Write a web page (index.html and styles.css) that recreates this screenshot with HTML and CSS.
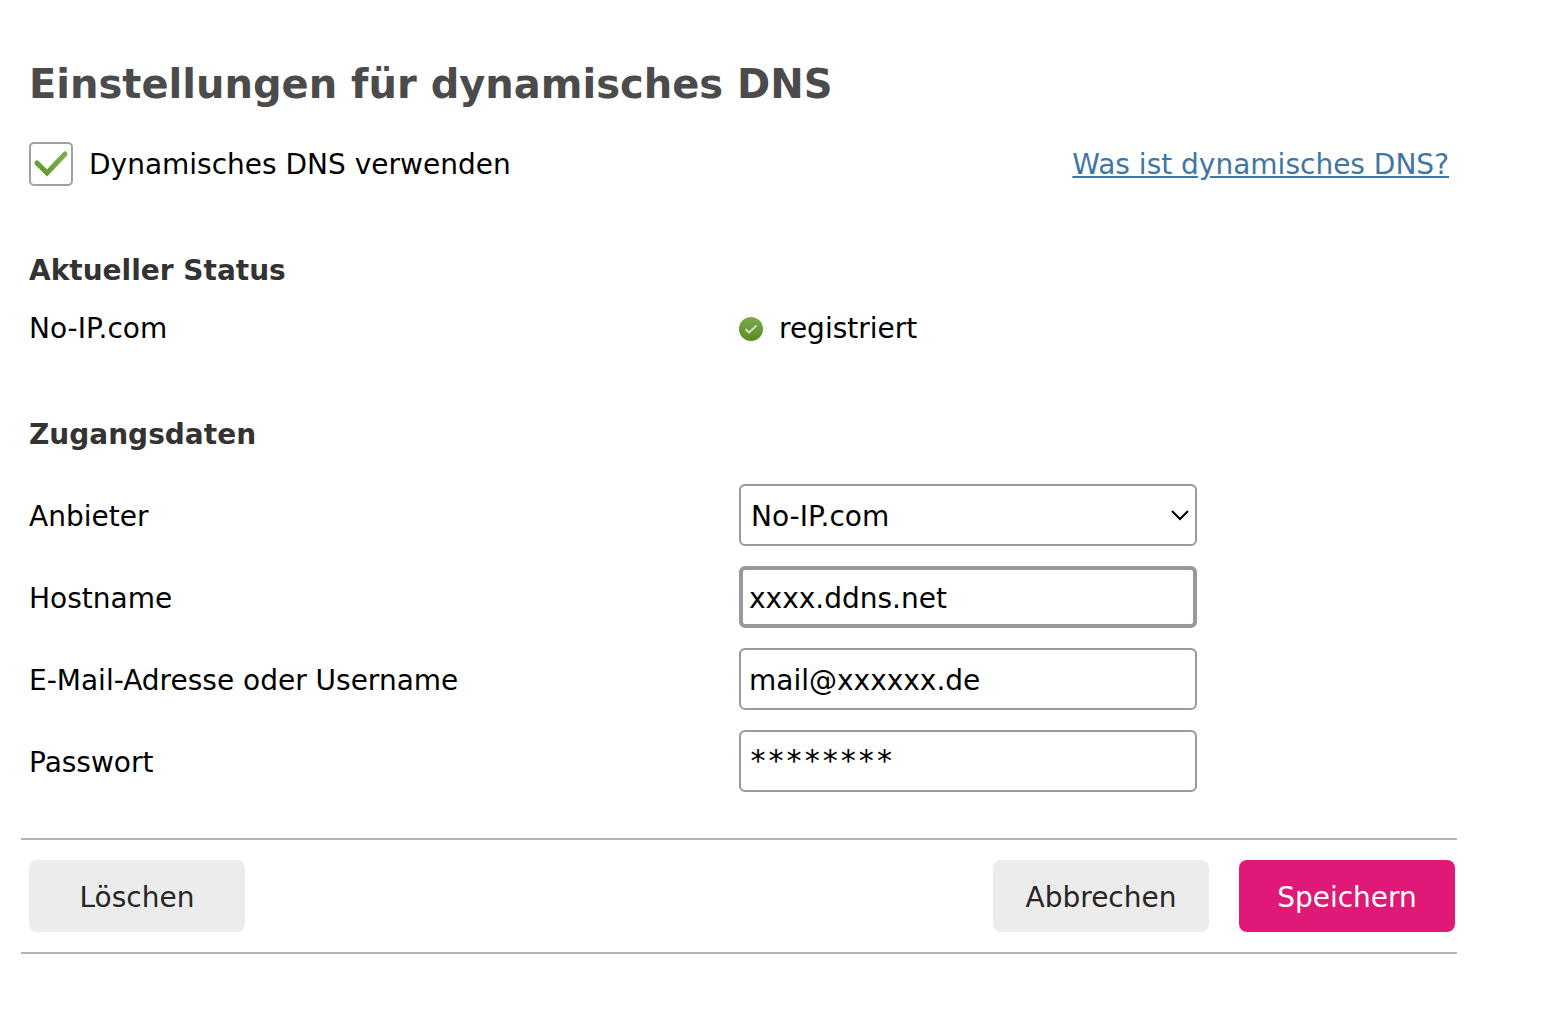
FILE: index.html
```html
<!DOCTYPE html>
<html lang="de">
<head>
    <meta charset="UTF-8">
    <meta name="viewport" content="width=device-width, initial-scale=1.0">
    <title>Einstellungen für dynamisches DNS</title>
    <link rel="stylesheet" href="styles.css">
</head>
<body>
    <form class="container">
        <div class="content">
            <h1>Einstellungen für dynamisches DNS</h1>

            <div class="activation">
                <div class="checkbox-group">
                    <input type="checkbox" id="use_dns" name="use_dns" checked>
                    <label for="use_dns">Dynamisches DNS verwenden</label>
                </div>
                <a class="help-link" href="#">Was ist dynamisches DNS?</a>
            </div>

            <section class="status">
                <h2>Aktueller Status</h2>
                <div class="row">
                    <span>No-IP.com</span>
                    <span class="state">
                        <svg class="state-icon" viewBox="0 0 24 24" aria-hidden="true">
                            <defs>
                                <linearGradient id="green" x1="0" y1="0" x2="0" y2="1">
                                    <stop offset="0" stop-color="#7cab4c"/>
                                    <stop offset="1" stop-color="#5a8a24"/>
                                </linearGradient>
                            </defs>
                            <circle cx="12" cy="12" r="12" fill="url(#green)"/>
                            <path d="M6.5 12l3.5 3.5 7.5-7" fill="none" stroke="#cfe0bd" stroke-width="2"/>
                        </svg>
                        registriert
                    </span>
                </div>
            </section>

            <section class="access">
                <h2>Zugangsdaten</h2>
                <div class="row">
                    <label for="provider">Anbieter</label>
                    <div class="select-wrap">
                        <select id="provider" name="provider">
                            <option>No-IP.com</option>
                        </select>
                        <svg class="arrow" viewBox="0 0 18 12" aria-hidden="true">
                            <path d="M1 2l8 8 8-8" fill="none" stroke="#000" stroke-width="2"/>
                        </svg>
                    </div>
                </div>
                <div class="row">
                    <label for="hostname">Hostname</label>
                    <input type="text" class="active" id="hostname" name="hostname" value="xxxx.ddns.net">
                </div>
                <div class="row">
                    <label for="username">E-Mail-Adresse oder Username</label>
                    <input type="text" id="username" name="username" value="mail@xxxxxx.de">
                </div>
                <div class="row">
                    <label for="password">Passwort</label>
                    <input type="text" class="masked" id="password" name="password" value="********">
                </div>
            </section>
        </div>

        <div class="actions">
            <button type="button" class="btn">Löschen</button>
            <div class="actions-right">
                <button type="reset" class="btn">Abbrechen</button>
                <button type="submit" class="btn btn-primary">Speichern</button>
            </div>
        </div>
    </form>
</body>
</html>
```
FILE: styles.css
```css
* {
    margin: 0;
    padding: 0;
    box-sizing: border-box;
}

body {
    font-family: Verdana, "DejaVu Sans", sans-serif;
    font-size: 28px;
    line-height: 36px;
    color: #000;
    background: #fff;
}

.container {
    margin: 59px 95px 0 21px;
}

.content {
    padding: 0 8px;
}

h1 {
    font-size: 40px;
    line-height: 50px;
    color: #4b4b4b;
}

h2 {
    font-size: 28px;
    line-height: 36px;
    color: #333;
}

.activation {
    display: flex;
    align-items: center;
    justify-content: space-between;
    margin-top: 33px;
}

.activation label,
.help-link {
    padding-top: 2px;
}

.checkbox-group {
    display: flex;
    align-items: center;
    gap: 16px;
}

.checkbox-group input {
    appearance: none;
    width: 44px;
    height: 44px;
    border: 2px solid #a0a0a0;
    border-radius: 5px;
    background: #fff;
}

.checkbox-group input:checked {
    background: #fff url("data:image/svg+xml,%3Csvg xmlns='http://www.w3.org/2000/svg' viewBox='0 0 40 40'%3E%3ClinearGradient id='g' x1='0' y1='1' x2='1' y2='0'%3E%3Cstop offset='0' stop-color='%235f9a28'/%3E%3Cstop offset='1' stop-color='%237eae4e'/%3E%3C/linearGradient%3E%3Cpath d='M6 19l10 10L34 10' fill='none' stroke='url(%23g)' stroke-width='5' stroke-linecap='round'/%3E%3C/svg%3E") center / 40px no-repeat;
}

.help-link {
    color: #3f76a3;
}

.status {
    margin-top: 67px;
}

.status .row {
    margin-top: 22px;
}

.access {
    margin-top: 70px;
}

.row {
    display: grid;
    grid-template-columns: 1fr 1fr;
    align-items: center;
}

.state {
    display: flex;
    align-items: center;
    gap: 16px;
}

.state-icon {
    width: 24px;
    height: 24px;
}

.access .row {
    margin-top: 20px;
}

.access h2 + .row {
    margin-top: 31px;
}

.access label {
    padding-top: 4px;
}

.row input,
.row select {
    width: 100%;
    max-width: 458px;
    height: 62px;
    padding: 2px 8px 0;
    border: 2px solid #999;
    border-radius: 6px;
    background: #fff;
    font: inherit;
    color: #000;
    outline: none;
}

.row input.active {
    border-width: 4px;
    padding: 2px 6px 0;
}

.row input.masked {
    padding: 0 8px 2px;
    font-family: "DejaVu Sans Mono", monospace;
    font-size: 30px;
}

.select-wrap {
    position: relative;
    max-width: 458px;
}

.row select {
    display: block;
    appearance: none;
    padding: 4px 10px 0;
}

.arrow {
    position: absolute;
    top: 25px;
    right: 8px;
    width: 18px;
    height: 12px;
    pointer-events: none;
}

.actions {
    display: flex;
    justify-content: space-between;
    margin-top: 46px;
    padding: 20px 2px 20px 8px;
    border-top: 2px solid #b2b2b2;
    border-bottom: 2px solid #b2b2b2;
}

.actions-right {
    display: flex;
    gap: 30px;
}

.btn {
    width: 216px;
    height: 72px;
    padding-top: 4px;
    border: none;
    border-radius: 8px;
    background: #ececec;
    color: #262626;
    font: inherit;
    cursor: pointer;
}

.btn-primary {
    background: #df1975;
    color: #fff;
}
```
